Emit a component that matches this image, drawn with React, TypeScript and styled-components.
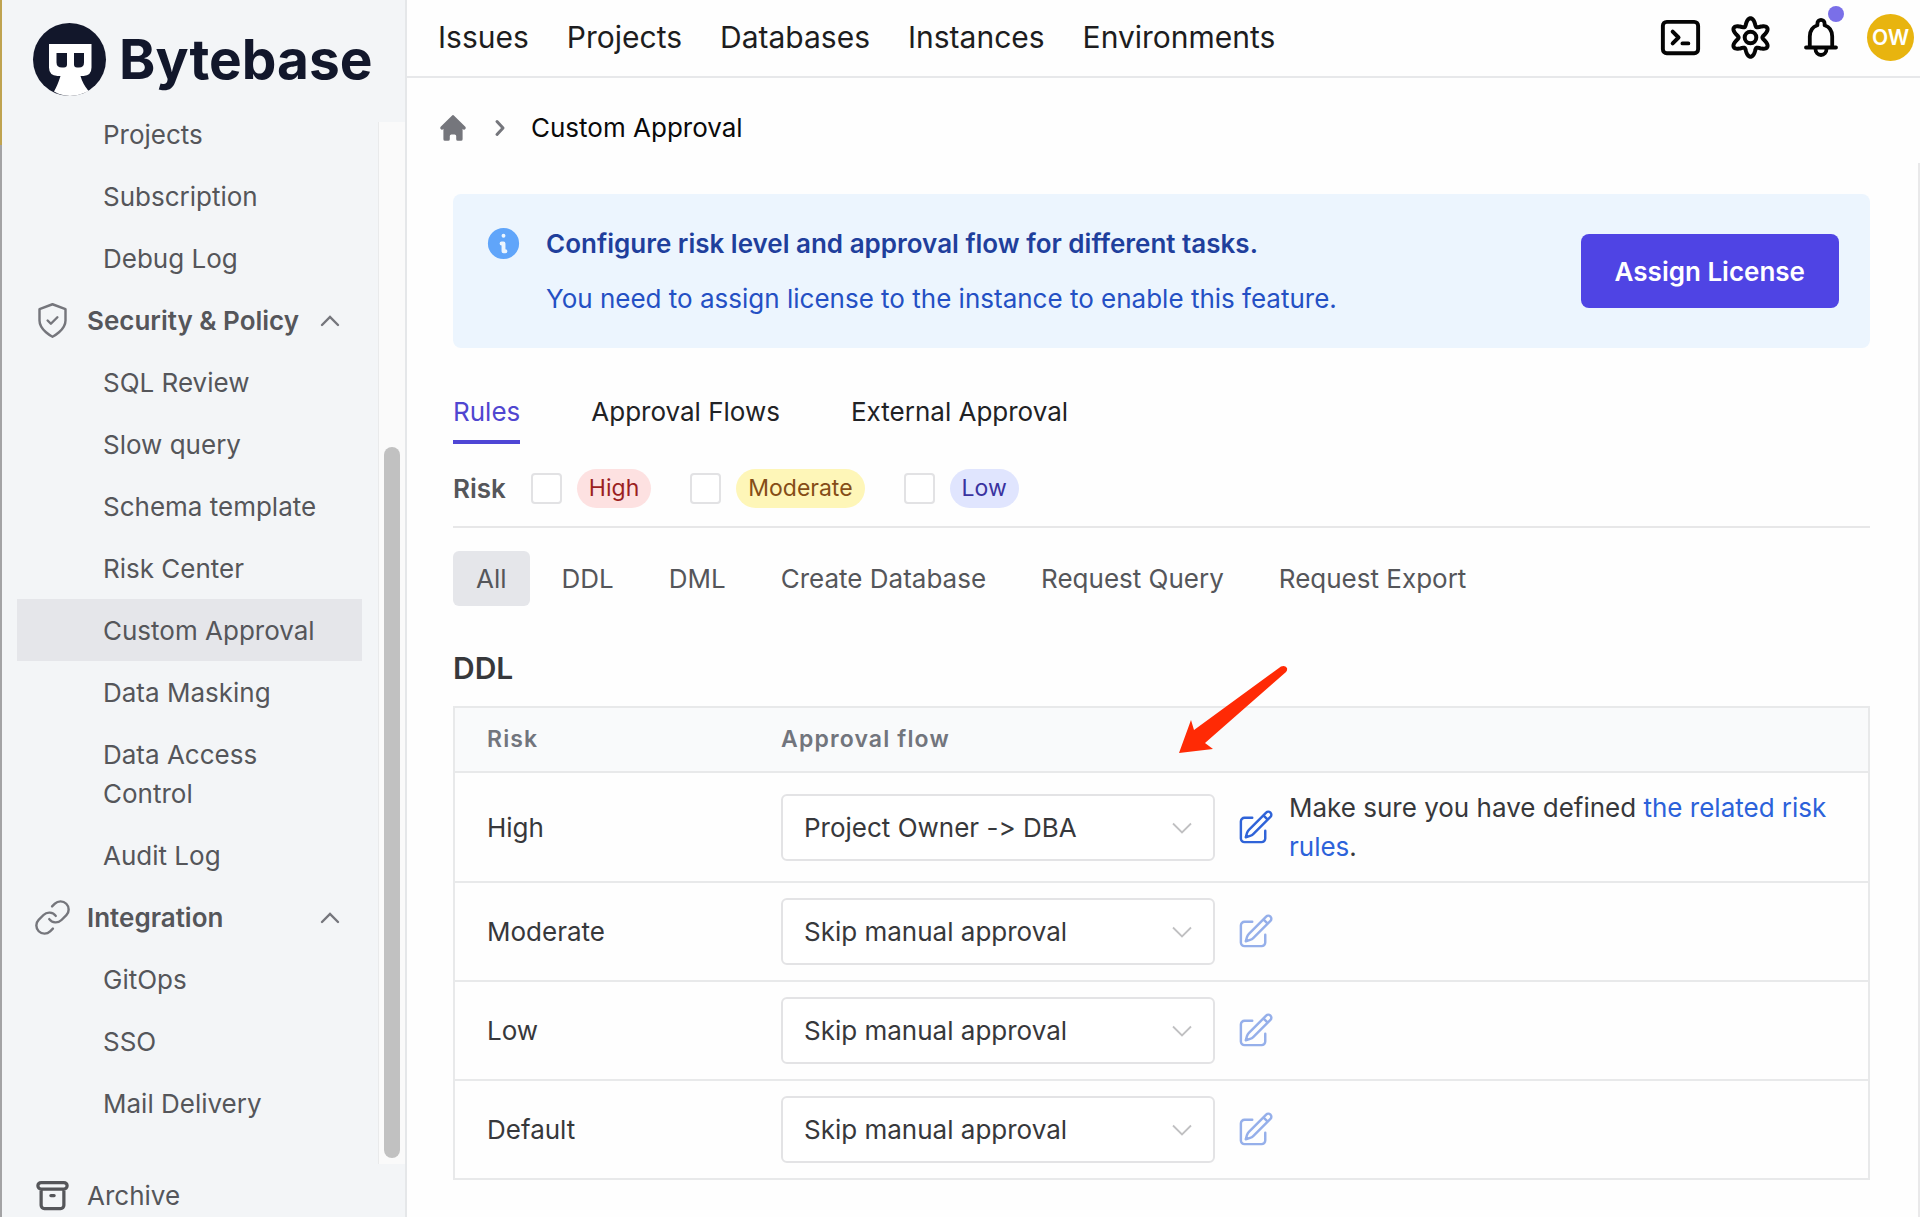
import React from 'react';
import styled, { createGlobalStyle } from 'styled-components';
import { Link as LinkIcon } from 'lucide-react';

const GlobalStyle = createGlobalStyle`
  *, *::before, *::after { box-sizing: border-box; }
  body {
    margin: 0;
    background: #fefefe;
    color: #37383b;
    font-family: Inter, "Liberation Sans", sans-serif;
    font-size: 26px;
    line-height: 39px;
  }
  button, input, select { font: inherit; color: inherit; margin: 0; }
  a { text-decoration: none; color: inherit; }
  h1, h2, p, ul { margin: 0; padding: 0; font-weight: inherit; font-size: inherit; }
  svg { display: block; flex: none; }
`;

/* ---------- shell ---------- */

const Shell = styled.div`
  display: flex;
  height: 100vh;
  overflow: hidden;
`;

const WindowEdge = styled.div`
  flex: 0 0 2px;
  background: linear-gradient(#bfa350 145px, #a3a3a5 145px);
`;

const Sidebar = styled.aside`
  display: flex;
  flex-direction: column;
  flex: 0 0 405px;
  background: #f3f5f7;
  border-right: 2px solid #e5e7e9;
`;

const LogoLink = styled.a`
  display: flex;
  align-items: center;
  gap: 12px;
  flex: 0 0 103px;
  padding: 15px 0 0 30px;
`;

const Wordmark = styled.span`
  color: #12172b;
  font-size: 55px;
  font-weight: 700;
  line-height: 64px;
`;

const ScrollRegion = styled.div`
  display: flex;
  flex: 1;
  min-height: 0;
`;

const NavViewport = styled.nav`
  display: flex;
  flex-direction: column;
  justify-content: flex-end;
  flex: 1;
  overflow: hidden;
  padding: 0 16px 30px 15px;
`;

const ScrollTrack = styled.div`
  display: flex;
  flex-direction: column;
  justify-content: flex-end;
  width: 27px;
  margin-top: 19px;
  padding: 6px 5px;
  background: #fafafa;
  border-left: 1px solid #e9eaeb;
`;

const ScrollThumb = styled.div`
  height: 69%;
  border-radius: 8px;
  background: #c1c1c1;
`;

const NavItem = styled.a<{ $active?: boolean }>`
  display: block;
  flex: none;
  padding: 12px 24px 11px 86px;
  color: #55565a;
  background: ${p => (p.$active ? '#e5e6ea' : 'transparent')};
`;

const NavGroup = styled.button`
  display: flex;
  align-items: center;
  flex: none;
  padding: 12px 22px 11px 16px;
  border: 0;
  background: none;
  color: #55565a;
  font-weight: 600;
  text-align: left;
`;

const NavGroupIcon = styled.span`
  margin-right: 15px;
  color: #75767c;
`;

const NavGroupLabel = styled.span`
  flex: 1;
  white-space: nowrap;
`;

const ArchiveLink = styled.a`
  display: flex;
  align-items: center;
  gap: 15px;
  padding: 12px 0 2px 31px;
  color: #55565a;
`;

const Main = styled.div`
  display: flex;
  flex-direction: column;
  flex: 1;
  min-width: 0;
`;

/* ---------- header ---------- */

const Header = styled.header`
  display: flex;
  align-items: center;
  justify-content: space-between;
  flex: 0 0 78px;
  padding: 0 6px 2px 31px;
  border-bottom: 2px solid #e7e8ea;
`;

const TopNav = styled.nav`
  display: flex;
  gap: 38px;
  font-size: 30px;
  color: #1d1d20;
`;

const Tools = styled.div`
  display: flex;
  align-items: center;
  gap: 23px;
`;

const IconButton = styled.button`
  position: relative;
  display: flex;
  align-items: center;
  justify-content: center;
  width: 47px;
  height: 47px;
  padding: 0;
  border: 0;
  background: none;
  color: #050505;
`;

const UnreadDot = styled.span`
  position: absolute;
  top: -8px;
  right: 0;
  width: 16px;
  height: 16px;
  border-radius: 50%;
  background: #7a6fe8;
`;

const Avatar = styled.button`
  width: 47px;
  height: 47px;
  padding: 0;
  border: 0;
  border-radius: 50%;
  background: #e8b40f;
  color: #fff;
  font-size: 21px;
  font-weight: 600;
`;

/* ---------- page ---------- */

const Breadcrumb = styled.nav`
  display: flex;
  align-items: center;
  flex: 0 0 85px;
  padding: 14px 0 0 30px;
  color: #0a0a0a;
`;

const Separator = styled.span`
  padding: 0 24px;
  color: #75767c;
`;

const Page = styled.main`
  flex: 1;
  padding: 31px 48px 31px 46px;
  border-right: 2px solid #e9e9ea;
`;

const Banner = styled.section`
  display: flex;
  align-items: center;
  padding: 30px 31px;
  border-radius: 8px;
  background: #ecf5fe;
`;

const BannerIcon = styled.span`
  align-self: flex-start;
  margin-right: 23px;
  color: #60a5fa;
`;

const BannerText = styled.div`
  flex: 1;
  display: grid;
  gap: 16px;
  color: #2450c4;
`;

const BannerTitle = styled.h1`
  color: #1f3f9c;
  font-weight: 600;
`;

const PrimaryButton = styled.button`
  height: 74px;
  padding: 0 34px;
  border: 0;
  border-radius: 8px;
  background: #4f44e4;
  color: #fff;
  font-weight: 600;
`;

const Tabs = styled.div`
  display: flex;
  gap: 71px;
  padding-top: 44px;
`;

const Tab = styled.button<{ $active?: boolean }>`
  padding: 0 0 9px;
  border: 0;
  border-bottom: 4px solid ${p => (p.$active ? '#4f46d5' : 'transparent')};
  background: none;
  color: ${p => (p.$active ? '#5046d0' : '#212225')};
`;

const RiskFilter = styled.fieldset`
  display: flex;
  align-items: center;
  gap: 39px;
  margin: 0;
  padding: 25px 0 18px;
  border: 0;
  border-bottom: 2px solid #e7e7e8;
`;

const RiskLabel = styled.span`
  margin-right: -14px;
  color: #55565a;
  font-weight: 600;
`;

const RiskOption = styled.label`
  display: flex;
  align-items: center;
  gap: 15px;
`;

const Checkbox = styled.input`
  appearance: none;
  width: 31px;
  height: 31px;
  border: 2px solid #e2e2e4;
  border-radius: 4px;
  background: #fff;
`;

const Pill = styled.span<{ $bg: string; $fg: string }>`
  padding: 0 12px;
  border-radius: 20px;
  background: ${p => p.$bg};
  color: ${p => p.$fg};
  font-size: 23px;
`;

const SourceFilter = styled.div`
  display: flex;
  gap: 9px;
  padding: 23px 0 39px;
`;

const SourceButton = styled.button<{ $active?: boolean }>`
  padding: 8px 23px;
  border: 0;
  border-radius: 6px;
  background: ${p => (p.$active ? '#e5e6ea' : 'transparent')};
  color: #55565a;
`;

const SectionTitle = styled.h2`
  padding: 4px 0 18px;
  font-size: 30px;
  font-weight: 600;
`;

const TableArea = styled.section`
  position: relative;
`;

const Pointer = styled.svg`
  position: absolute;
  top: -42px;
  left: 726px;
`;

const RuleTable = styled.table`
  width: 100%;
  border-collapse: collapse;
  border: 2px solid #e8e9ea;
`;

const HeadCell = styled.th<{ $first?: boolean }>`
  width: ${p => (p.$first ? '327px' : 'auto')};
  padding: 12px 0 12px ${p => (p.$first ? '32px' : '0')};
  background: #f9fafb;
  border-bottom: 2px solid #e8e9ea;
  color: #72757d;
  font-size: 23px;
  font-weight: 600;
  letter-spacing: 0.05em;
  text-align: left;
`;

const Cell = styled.td<{ $first?: boolean }>`
  padding: 15px 16px 15px ${p => (p.$first ? '32px' : '0')};
  border-bottom: 2px solid #e8e9ea;
`;

const FlowRow = styled.div`
  display: flex;
  align-items: center;
`;

const SelectBox = styled.div`
  position: relative;
  flex: 0 0 434px;
`;

const Select = styled.select`
  display: block;
  appearance: none;
  width: 100%;
  height: 67px;
  padding: 0 60px 0 21px;
  border: 2px solid #e3e3e5;
  border-radius: 6px;
  background: #fff;
  font-variant-ligatures: no-contextual;
`;

const SelectArrow = styled.svg`
  position: absolute;
  top: 28px;
  right: 23px;
  pointer-events: none;
`;

const EditButton = styled.button`
  margin: 0 14px 0 21px;
  padding: 0;
  border: 0;
  background: none;
  color: #2f63d8;
  &:disabled { opacity: 0.5; }
`;

const InlineLink = styled.a`
  color: #2c62da;
`;

/* ---------- drawings ---------- */

const Outline = ({ size = 39, width = 2, children }: { size?: number; width?: number; children: React.ReactNode }) => (
  <svg width={size} height={size} viewBox="0 0 24 24" fill="none" stroke="currentColor"
    strokeWidth={width} strokeLinecap="round" strokeLinejoin="round" aria-hidden="true">
    {children}
  </svg>
);

const LogoMark = () => (
  <svg width="75" height="75" viewBox="0 0 75 75" aria-hidden="true">
    <circle cx="37.500" cy="37.500" r="36.500" fill="#12172b" />
    <path fill="#fff" d="M17 22H59.500V45.500Q59.500 53.500 51.500 54H48.500Q50.500 61.500 56.500 69Q37.500 78.500 22 69.500Q25.500 63.500 28.500 54H25.500Q17 53.500 17 45.500Z" />
    <path fill="#12172b" d="M24.500 31H35V42.500Q35 45.500 32 45.500H30Q24.500 45.500 24.500 40.500ZM42 31H52V40.500Q52 45.500 47 45.500H45Q42 45.500 42 42.500Z" />
  </svg>
);

const ShieldIcon = () => (
  <Outline width={1.5}>
    <path d="M12 22s8-4 8-10V5l-8-3-8 3v7c0 6 8 10 8 10" />
    <path d="m9 12 2 2 4-4" />
  </Outline>
);

const ChevronUp = () => (
  <svg width="20" height="14" viewBox="0 0 20 14" fill="none" stroke="#75767c" strokeWidth="2.400" strokeLinecap="round" aria-hidden="true">
    <path d="M2 11 10 3l8 8" />
  </svg>
);

const PencilSquare = () => (
  <Outline width={1.5}>
    <path d="m16.862 4.487 1.687-1.688a1.875 1.875 0 1 1 2.652 2.652L10.582 16.07a4.5 4.5 0 0 1-1.897 1.13L6 18l.8-2.685a4.5 4.5 0 0 1 1.13-1.897l8.932-8.931Zm0 0L19.5 7.125M18 14v4.75A2.25 2.25 0 0 1 15.75 21H5.25A2.25 2.25 0 0 1 3 18.75V8.25A2.25 2.25 0 0 1 5.25 6H10" />
  </Outline>
);

/* Six rounded teeth: a circle whose radius swings with the angle. */
const gearPoints = Array.from({ length: 180 }, (_, i) => {
  const a = (i * Math.PI) / 90;
  const r = 15.6 + 3.7 * Math.cos(6 * a);
  return `${(r * Math.sin(a)).toFixed(2)},${(-r * Math.cos(a)).toFixed(2)}`;
}).join(' ');

const GearIcon = () => (
  <svg width="47" height="47" viewBox="-23.5 -23.5 47 47" fill="none" stroke="currentColor" strokeWidth="4" strokeLinejoin="round" aria-hidden="true">
    <polygon points={gearPoints} />
    <circle r="5.800" />
  </svg>
);

const BellIcon = () => (
  <svg width="34" height="39" viewBox="0 0 34 39" fill="none" stroke="currentColor" strokeWidth="3.800" strokeLinecap="round" strokeLinejoin="round" aria-hidden="true">
    <path d="M2 29.500H32M5.800 29V18.500C5.800 13 8.500 8.800 13.400 7.200V5.500a3.600 3.600 0 0 1 7.200 0V7.200C25.500 8.800 28.200 13 28.200 18.500V29" />
    <path d="M11.500 31a5.500 6 0 0 0 11 0" />
  </svg>
);

/* ---------- data ---------- */

type Entry = { label: string; icon?: React.ReactNode; active?: boolean };

const entries: Entry[] = [
  { label: 'Projects' },
  { label: 'Subscription' },
  { label: 'Debug Log' },
  { label: 'Security & Policy', icon: <ShieldIcon /> },
  { label: 'SQL Review' },
  { label: 'Slow query' },
  { label: 'Schema template' },
  { label: 'Risk Center' },
  { label: 'Custom Approval', active: true },
  { label: 'Data Masking' },
  { label: 'Data Access Control' },
  { label: 'Audit Log' },
  { label: 'Integration', icon: <LinkIcon size={39} strokeWidth={1.5} /> },
  { label: 'GitOps' },
  { label: 'SSO' },
  { label: 'Mail Delivery' },
];

const risks = [
  { label: 'High', bg: '#fde1e1', fg: '#9b1f22' },
  { label: 'Moderate', bg: '#fef6b8', fg: '#854d17' },
  { label: 'Low', bg: '#e0e5fe', fg: '#3a33a0' },
];

const flows = ['Skip manual approval', 'Project Owner -> DBA'];

const rules = [
  { risk: 'High', flow: flows[1], editable: true },
  { risk: 'Moderate', flow: flows[0], editable: false },
  { risk: 'Low', flow: flows[0], editable: false },
  { risk: 'Default', flow: flows[0], editable: false },
];

export default function App() {
  return (
    <Shell>
      <GlobalStyle />
      <WindowEdge />
      <Sidebar>
        <LogoLink href="#">
          <LogoMark />
          <Wordmark>Bytebase</Wordmark>
        </LogoLink>
        <ScrollRegion>
          <NavViewport aria-label="Settings">
            {entries.map(e =>
              e.icon ? (
                <NavGroup key={e.label} aria-expanded="true">
                  <NavGroupIcon>{e.icon}</NavGroupIcon>
                  <NavGroupLabel>{e.label}</NavGroupLabel>
                  <ChevronUp />
                </NavGroup>
              ) : (
                <NavItem key={e.label} href="#" $active={e.active}>{e.label}</NavItem>
              )
            )}
          </NavViewport>
          <ScrollTrack><ScrollThumb /></ScrollTrack>
        </ScrollRegion>
        <ArchiveLink href="#">
          <Outline>
            <path d="M5 8h14M5 8a2 2 0 110-4h14a2 2 0 110 4M5 8v10a2 2 0 002 2h10a2 2 0 002-2V8m-8 4h2" />
          </Outline>
          Archive
        </ArchiveLink>
      </Sidebar>

      <Main>
        <Header>
          <TopNav aria-label="Main">
            {['Issues', 'Projects', 'Databases', 'Instances', 'Environments'].map(t => (
              <a key={t} href="#">{t}</a>
            ))}
          </TopNav>
          <Tools>
            <IconButton aria-label="SQL editor">
              <Outline size={47}>
                <path d="M8 9l3 3-3 3m5 0h3M5 20h14a2 2 0 002-2V6a2 2 0 00-2-2H5a2 2 0 00-2 2v12a2 2 0 002 2z" />
              </Outline>
            </IconButton>
            <IconButton aria-label="Settings"><GearIcon /></IconButton>
            <IconButton aria-label="Inbox"><BellIcon /><UnreadDot /></IconButton>
            <Avatar aria-label="Account">OW</Avatar>
          </Tools>
        </Header>

        <Breadcrumb aria-label="Breadcrumb">
          <a href="#" aria-label="Home">
            <svg width="32" height="32" viewBox="0 0 20 20" fill="#75767c" aria-hidden="true">
              <path d="M10.707 2.293a1 1 0 00-1.414 0l-7 7a1 1 0 001.414 1.414L4 10.414V17a1 1 0 001 1h2a1 1 0 001-1v-2a1 1 0 011-1h2a1 1 0 011 1v2a1 1 0 001 1h2a1 1 0 001-1v-6.586l.293.293a1 1 0 001.414-1.414l-7-7z" />
            </svg>
          </a>
          <Separator>
            <svg width="14" height="20" viewBox="0 0 14 20" fill="none" stroke="currentColor" strokeWidth="3" strokeLinecap="round" strokeLinejoin="round" aria-hidden="true">
              <path d="M4 3.500 10 10l-6 6.500" />
            </svg>
          </Separator>
          Custom Approval
        </Breadcrumb>

        <Page>
          <Banner>
            <BannerIcon>
              <svg width="39" height="39" viewBox="0 0 20 20" fill="currentColor" aria-hidden="true">
                <path fillRule="evenodd" d="M18 10a8 8 0 11-16 0 8 8 0 0116 0zm-7-4a1 1 0 11-2 0 1 1 0 012 0zM9 9a1 1 0 000 2v3a1 1 0 001 1h1a1 1 0 100-2v-3a1 1 0 00-1-1H9z" />
              </svg>
            </BannerIcon>
            <BannerText>
              <BannerTitle>Configure risk level and approval flow for different tasks.</BannerTitle>
              <p>You need to assign license to the instance to enable this feature.</p>
            </BannerText>
            <PrimaryButton>Assign License</PrimaryButton>
          </Banner>

          <Tabs role="tablist">
            <Tab role="tab" aria-selected="true" $active>Rules</Tab>
            <Tab role="tab" aria-selected="false">Approval Flows</Tab>
            <Tab role="tab" aria-selected="false">External Approval</Tab>
          </Tabs>

          <RiskFilter aria-label="Risk">
            <RiskLabel>Risk</RiskLabel>
            {risks.map(r => (
              <RiskOption key={r.label}>
                <Checkbox type="checkbox" />
                <Pill $bg={r.bg} $fg={r.fg}>{r.label}</Pill>
              </RiskOption>
            ))}
          </RiskFilter>

          <SourceFilter>
            {['All', 'DDL', 'DML', 'Create Database', 'Request Query', 'Request Export'].map((s, i) => (
              <SourceButton key={s} $active={i === 0}>{s}</SourceButton>
            ))}
          </SourceFilter>

          <SectionTitle>DDL</SectionTitle>
          <TableArea>
            <RuleTable>
              <thead>
                <tr>
                  <HeadCell $first>Risk</HeadCell>
                  <HeadCell>Approval flow</HeadCell>
                </tr>
              </thead>
              <tbody>
                {rules.map(r => (
                  <tr key={r.risk}>
                    <Cell $first>{r.risk}</Cell>
                    <Cell>
                      <FlowRow>
                        <SelectBox>
                          <Select aria-label={`${r.risk} approval flow`} defaultValue={r.flow}>
                            {flows.map(f => <option key={f}>{f}</option>)}
                          </Select>
                          <SelectArrow width="20" height="12" viewBox="0 0 20 12" fill="none" stroke="#c0c0c2" strokeWidth="1.800" aria-hidden="true">
                            <path d="M1 1.500 10 10.500 19 1.500" />
                          </SelectArrow>
                        </SelectBox>
                        <EditButton aria-label={`Edit ${r.risk} flow`} disabled={!r.editable}>
                          <PencilSquare />
                        </EditButton>
                        {r.editable && (
                          <p>Make sure you have defined <InlineLink href="#">the related risk rules</InlineLink>.</p>
                        )}
                      </FlowRow>
                    </Cell>
                  </tr>
                ))}
              </tbody>
            </RuleTable>
            <Pointer width="110" height="90" viewBox="0 0 110 90" aria-hidden="true">
              <path fill="#ff2a05" d="M0 89 12 56 15 66 102 2.500Q106 1 108 4Q108.500 6.500 107 8L26 79 34 85Z" />
            </Pointer>
          </TableArea>
        </Page>
      </Main>
    </Shell>
  );
}
